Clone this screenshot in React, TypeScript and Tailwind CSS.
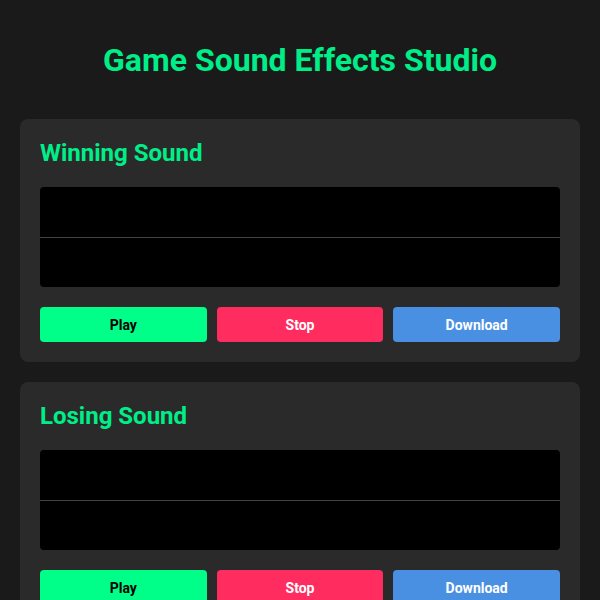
import React from 'react';

const sounds = ['Winning Sound', 'Losing Sound', 'Power Up Sound', 'Coin Sound'];

const SoundCard = ({ name }: { name: string }) => (
  <div className="bg-[#2a2a2a] rounded-lg p-5 mb-5">
    <h2 className="text-[24px] leading-[28px] font-bold text-[#00ee88] mb-5">{name}</h2>
    {/* waveform canvas */}
    <div className="h-[100px] bg-black rounded flex flex-col justify-center">
      <div className="h-px bg-[#444]" />
    </div>
    <div className="grid grid-cols-3 gap-[10px] mt-5">
      <button className="h-[35px] rounded bg-[#00ff88] text-black text-sm font-bold">Play</button>
      <button className="h-[35px] rounded bg-[#ff2d5f] text-white text-sm font-bold">Stop</button>
      <button className="h-[35px] rounded bg-[#4a90e2] text-white text-sm font-bold">Download</button>
    </div>
  </div>
);

export default function App() {
  return (
    <div className="min-h-screen bg-[#1a1a1a] px-5 pt-[41px] font-['Roboto',sans-serif]">
      <h1 className="text-[32px] leading-[38px] font-bold text-center text-[#00ee88] mb-[40px]">
        Game Sound Effects Studio
      </h1>
      {sounds.map(s => (
        <SoundCard key={s} name={s} />
      ))}
    </div>
  );
}
